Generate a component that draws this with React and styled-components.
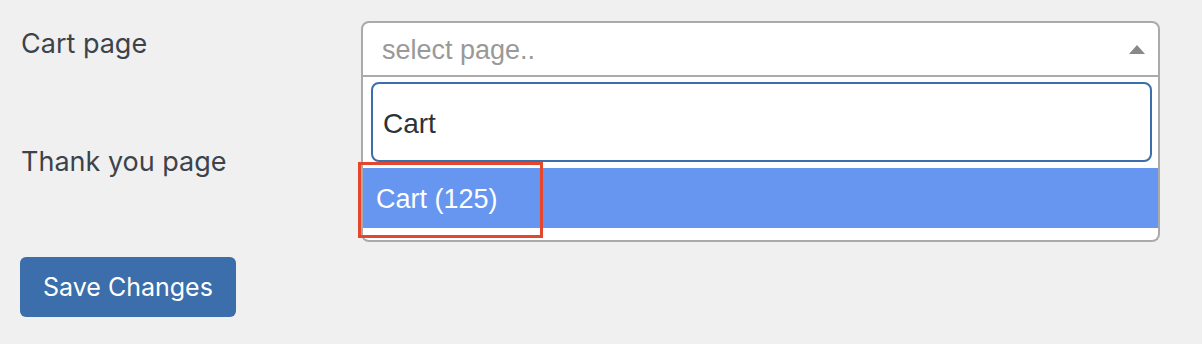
import React from "react";
import styled, { createGlobalStyle } from "styled-components";

const GlobalStyle = createGlobalStyle`
  html, body { margin: 0; padding: 0; background: #f0f0f1; }
  body { font-family: Inter, "Noto Sans", sans-serif; color: #3c434a; }
  * { box-sizing: border-box; }
`;

const Page = styled.div`
  padding: 21px 20px 0 21px;
  display: flex;
  flex-direction: column;
  gap: 62px;
`;

const Row = styled.div`
  display: grid;
  grid-template-columns: 340px 799px;
  align-items: start;
`;

const Label = styled.div`
  font-size: 27px;
  line-height: 40px;
  padding-top: 3px;
  color: #3c434a;
`;

const SelectWrap = styled.div`
  position: relative;
  z-index: ${(p) => (p.$open ? 5 : 1)};
`;

const SelectHead = styled.div`
  height: 56px;
  background: #fff;
  border: 2px solid #aaa;
  border-radius: ${(p) => (p.$open ? "8px 8px 0 0" : "8px")};
  display: flex;
  align-items: center;
  justify-content: space-between;
  padding: 3px 13px 0 19px;
  font-family: "Liberation Sans", Arial, sans-serif;
  font-size: 27px;
  color: #999;
`;

const Arrow = styled.span`
  width: 0;
  height: 0;
  margin-bottom: 3px;
  border-left: 8px solid transparent;
  border-right: 8px solid transparent;
  ${(p) =>
    p.$up
      ? "border-bottom: 9px solid #888;"
      : "border-top: 9px solid #888;"}
`;

const Dropdown = styled.div`
  position: absolute;
  left: 0;
  right: 0;
  top: 56px;
  background: #fff;
  border: 2px solid #aaa;
  border-top: none;
  border-radius: 0 0 8px 8px;
  padding-bottom: 12px;
`;

const SearchBox = styled.div`
  padding: 5px 6px 6px 8px;
`;

const SearchInput = styled.div`
  height: 80px;
  border: 2px solid #3b6eaa;
  border-radius: 8px;
  display: flex;
  align-items: center;
  padding: 4px 0 0 10px;
  font-family: "Liberation Sans", Arial, sans-serif;
  font-size: 28px;
  color: #2c3338;
`;

const ResultList = styled.ul`
  list-style: none;
  margin: 0;
  padding: 0;
`;

const ResultItem = styled.li`
  position: relative;
  height: 60px;
  display: flex;
  align-items: center;
  padding: 3px 0 0 13px;
  font-family: "Liberation Sans", Arial, sans-serif;
  font-size: 27px;
  color: ${(p) => (p.$highlighted ? "#fff" : "#2c3338")};
  background: ${(p) => (p.$highlighted ? "#6796f0" : "transparent")};
`;

const Annotation = styled.span`
  position: absolute;
  left: -5px;
  top: -6px;
  width: 185px;
  height: 76px;
  border: 3px solid #e5472d;
  pointer-events: none;
`;

const SaveButton = styled.button`
  align-self: flex-start;
  margin-left: -1px;
  height: 60px;
  padding: 0 23px;
  background: #3b6eaa;
  color: #fff;
  border: none;
  border-radius: 6px;
  font-family: Inter, "Noto Sans", sans-serif;
  font-size: 25px;
  cursor: pointer;
`;

function Select({ open }) {
  return (
    <SelectWrap $open={open}>
      <SelectHead $open={open}>
        <span>select page..</span>
        <Arrow $up={open} />
      </SelectHead>
      {open && (
        <Dropdown>
          <SearchBox>
            <SearchInput>Cart</SearchInput>
          </SearchBox>
          <ResultList>
            <ResultItem $highlighted>
              Cart (125)
              <Annotation />
            </ResultItem>
          </ResultList>
        </Dropdown>
      )}
    </SelectWrap>
  );
}

export default function App() {
  return (
    <>
      <GlobalStyle />
      <Page>
        <Row>
          <Label>Cart page</Label>
          <Select open />
        </Row>
        <Row>
          <Label>Thank you page</Label>
          <Select />
        </Row>
        <SaveButton>Save Changes</SaveButton>
      </Page>
    </>
  );
}
